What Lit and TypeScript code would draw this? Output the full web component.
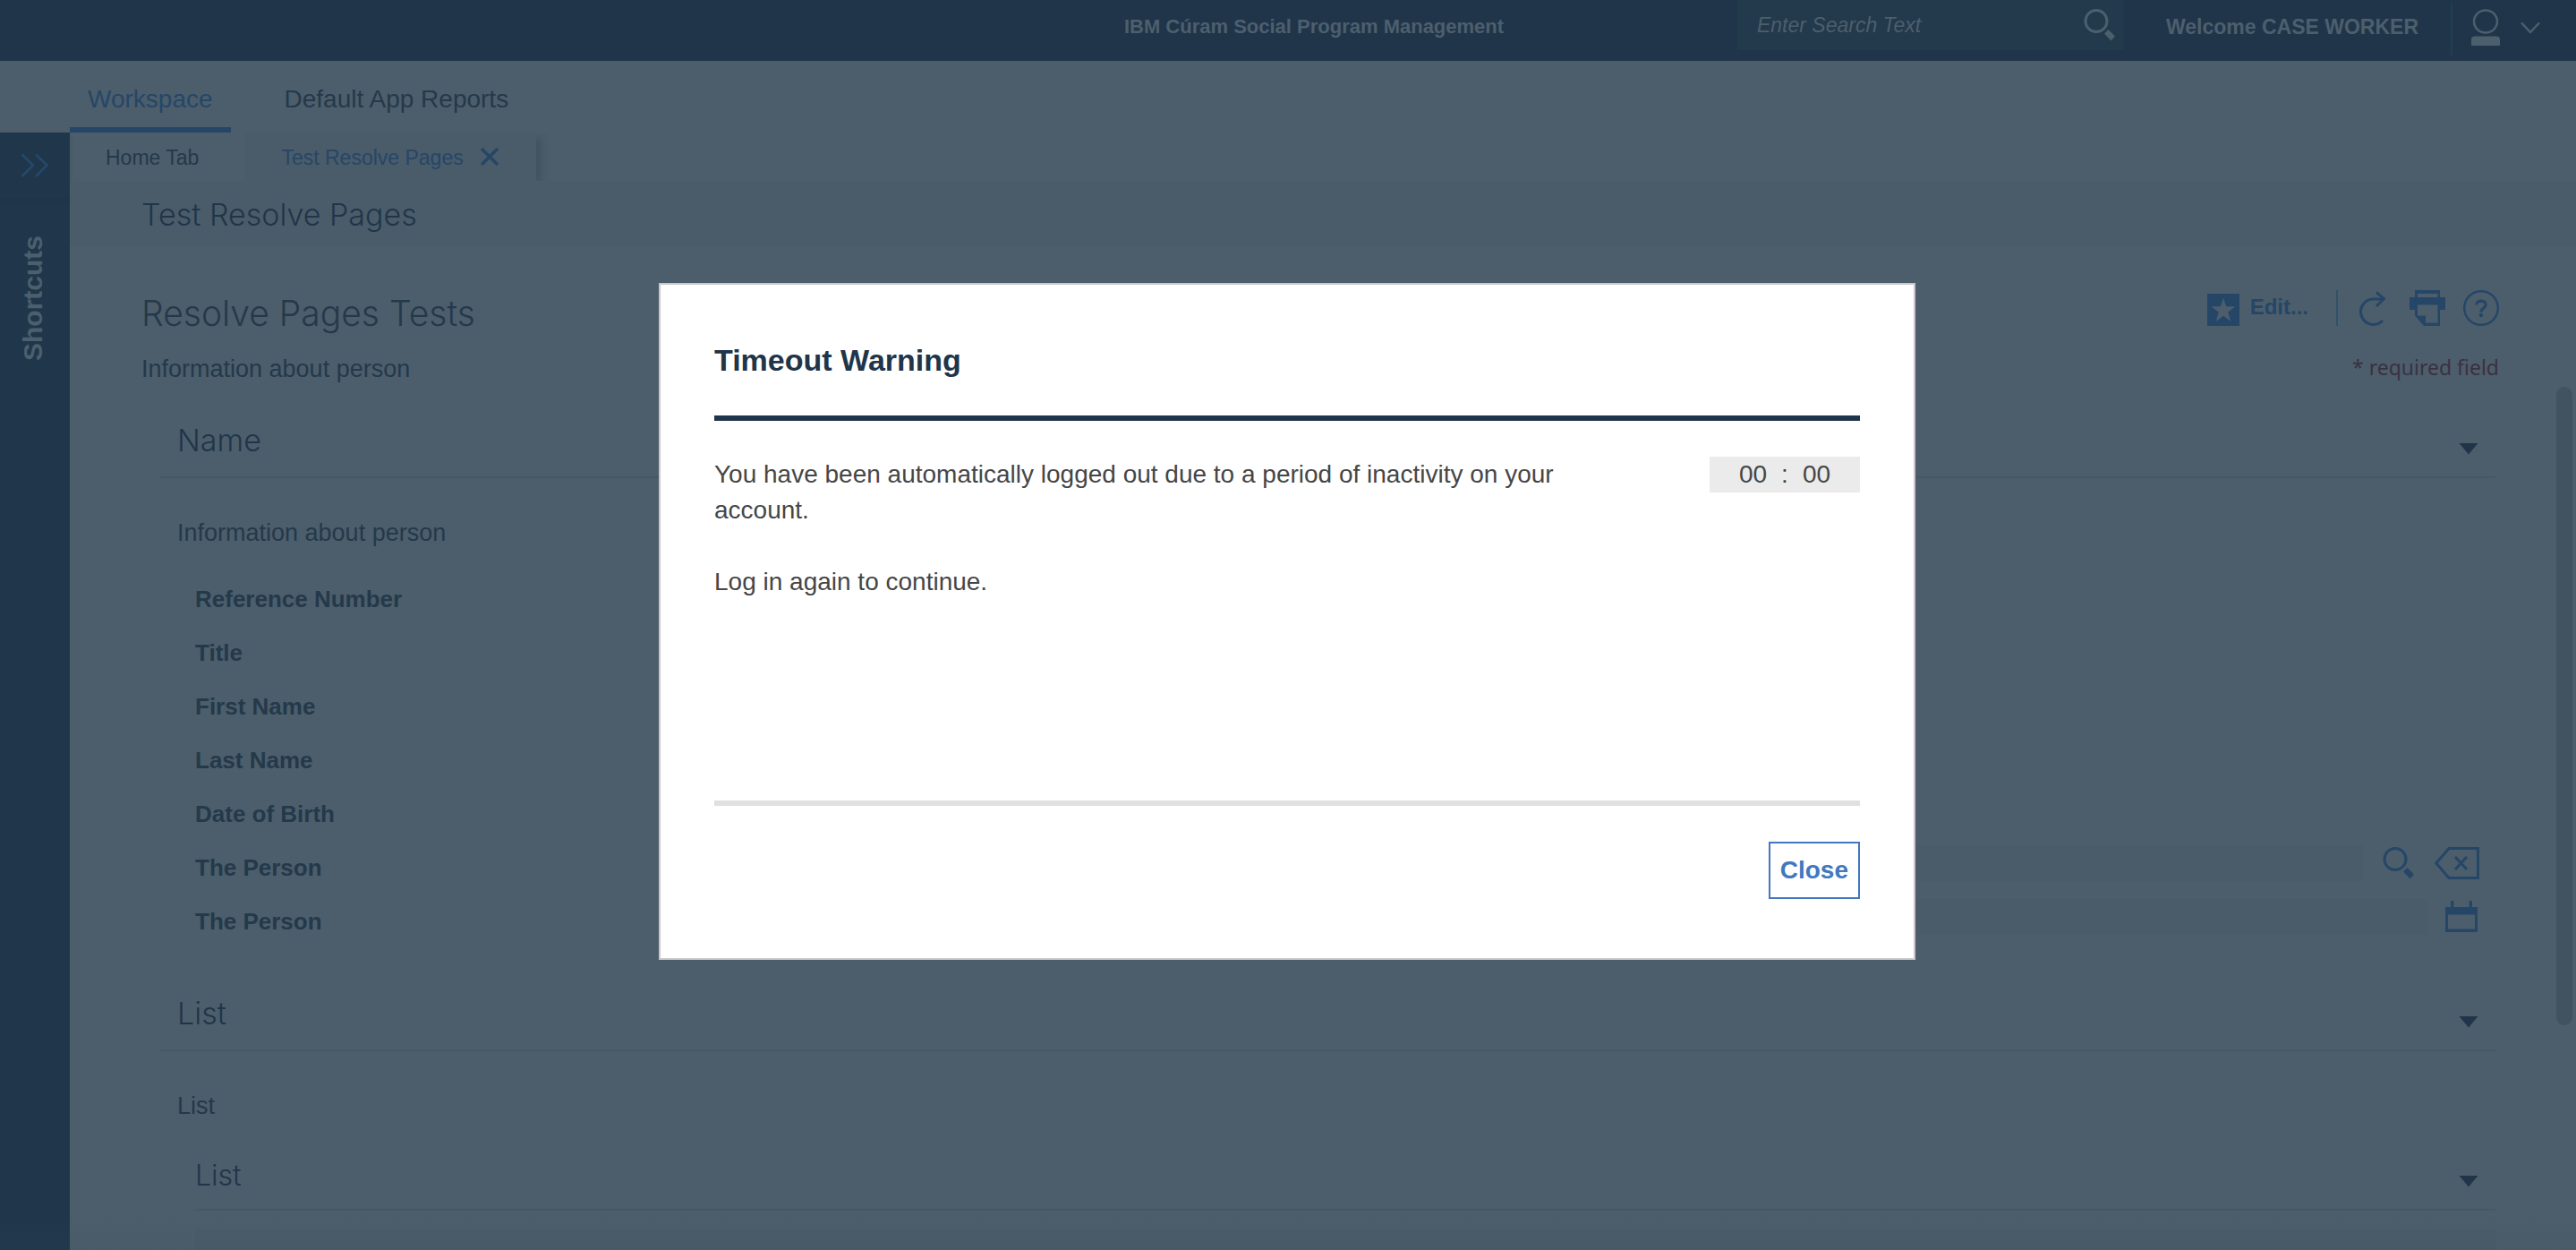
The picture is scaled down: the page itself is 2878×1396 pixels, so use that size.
import { LitElement, html, css } from "lit";
import { customElement } from "lit/decorators.js";

const magnifier = html`<svg class="glyph" width="36" height="36" viewBox="0 0 36 36" aria-hidden="true">
  <circle cx="14" cy="13.500" r="12" fill="none" stroke="currentColor" stroke-width="3" />
  <path d="M27.500 23 L35 30.500 L30.500 35.500 L23 27.500 Z" fill="currentColor" />
</svg>`;

const caret = html`<svg width="22" height="13" viewBox="0 0 22 13" aria-hidden="true">
  <path d="M0.500 0 H21.500 L11 12.500 Z" fill="currentColor" />
</svg>`;

interface Field {
  label: string;
  kind?: "lookup" | "date";
}

const FIELDS: Field[] = [
  { label: "Reference Number" },
  { label: "Title" },
  { label: "First Name" },
  { label: "Last Name" },
  { label: "Date of Birth" },
  { label: "The Person", kind: "lookup" },
  { label: "The Person", kind: "date" },
];

@customElement("timeout-dialog")
export class TimeoutDialog extends LitElement {
  static styles = css`
    :host {
      display: block;
      box-sizing: border-box;
      width: 1404px;
      max-width: 90%;
      background: #ffffff;
      border: 2px solid #c9c8cb;
      padding: 56px 60px 66px;
      color: #464646;
      font-size: 28px;
      line-height: 40px;
    }
    .title {
      margin: 0;
      padding: 8px 0 42px;
      border-bottom: 6px solid #20354a;
      color: #20354a;
      font-size: 34px;
      font-weight: 700;
    }
    .body {
      display: flex;
      justify-content: space-between;
      align-items: flex-start;
      box-sizing: border-box;
      min-height: 430px;
      padding-top: 40px;
      border-bottom: 6px solid #e0e0e0;
    }
    .message {
      max-width: 1000px;
    }
    .message p {
      margin: 0 0 40px;
    }
    .timer {
      display: flex;
      justify-content: center;
      gap: 16px;
      width: 168px;
      background: #ebebeb;
    }
    .actions {
      display: flex;
      justify-content: flex-end;
      padding-top: 40px;
    }
    .close {
      font: inherit;
      font-weight: 700;
      color: #4178be;
      background: #ffffff;
      border: 2px solid #4178be;
      border-radius: 0;
      padding: 10px 11px;
    }
  `;

  render() {
    return html`
      <h2 class="title">Timeout Warning</h2>
      <div class="body">
        <div class="message">
          <p>You have been automatically logged out due to a period of inactivity on your account.</p>
          <p>Log in again to continue.</p>
        </div>
        <div class="timer" role="timer"><span>00</span><span>:</span><span>00</span></div>
      </div>
      <div class="actions"><button class="close" type="button">Close</button></div>
    `;
  }
}

@customElement("app-root")
export class AppRoot extends LitElement {
  static styles = css`
    :host {
      --page: #4c5e6b;
      --panel: #4a5c69;
      --navy: #20354a;
      --ink: #24394a;
      --blue: #264668;
      --pale: #4c5f6d;
      --rule: #465765;
      display: flex;
      flex-direction: column;
      position: relative;
      height: 100vh;
      overflow: hidden;
      background: var(--page);
      color: var(--ink);
      font-family: "Liberation Sans", Arial, sans-serif;
      font-size: 27px;
      line-height: 32px;
    }
    a {
      color: inherit;
      text-decoration: none;
    }
    button {
      display: flex;
      padding: 0;
      border: 0;
      background: none;
      color: inherit;
      font: inherit;
    }
    svg {
      display: block;
      flex: none;
    }
    input {
      border: 0;
      border-radius: 0;
      outline: 0;
      font: inherit;
      color: inherit;
    }
    h1,
    h2,
    h3,
    p {
      margin: 0;
    }

    .header {
      display: grid;
      grid-template-columns: 1fr auto 1fr;
      box-sizing: border-box;
      height: 68px;
      flex: none;
      padding-left: 58px;
      background: var(--navy);
      color: var(--pale);
      font-size: 23px;
      line-height: 28px;
    }
    .brand {
      grid-column: 2;
      padding-top: 16px;
      font-size: 22px;
      font-weight: 700;
    }
    .tools {
      display: flex;
      justify-content: flex-end;
      align-items: flex-start;
    }
    .search {
      display: flex;
      align-items: center;
      box-sizing: border-box;
      width: 431px;
      height: 56px;
      padding: 0 8px 0 22px;
      margin-right: 48px;
      background: #23394c;
    }
    .search input {
      flex: 1;
      min-width: 0;
      padding: 0;
      background: none;
      font-style: italic;
    }
    .search input::placeholder {
      color: var(--pale);
      opacity: 1;
    }
    .welcome {
      padding: 16px 36px 0 0;
      font-weight: 700;
    }
    .user {
      gap: 22px;
      align-items: center;
      height: 58px;
      margin-top: 4px;
      padding: 0 40px 4px 20px;
      border-left: 2px solid #213e57;
    }

    .nav {
      display: flex;
      flex: none;
      gap: 40px;
      padding-left: 78px;
      font-size: 28px;
    }
    .nav a {
      padding: 27px 20px 15px;
      border-bottom: 6px solid transparent;
    }
    .nav a.current {
      color: var(--blue);
      border-color: var(--blue);
    }

    .frame {
      display: flex;
      flex: 1;
      min-height: 0;
    }
    .rail {
      display: flex;
      flex-direction: column;
      align-items: center;
      width: 78px;
      flex: none;
      background: #20374b;
    }
    .expand {
      box-sizing: border-box;
      justify-content: center;
      width: 78px;
      height: 74px;
      padding-top: 23px;
      color: #25496a;
      box-shadow: 0 3px 4px rgba(20, 38, 58, 0.15);
    }
    .shortcuts {
      writing-mode: vertical-rl;
      transform: rotate(180deg);
      margin-right: 4px;
      padding-bottom: 41px;
      color: var(--pale);
      font-size: 30px;
      font-weight: 700;
      line-height: 36px;
    }

    .main {
      display: flex;
      flex-direction: column;
      flex: 1;
      min-width: 0;
    }
    .tabs {
      display: flex;
      gap: 52px;
      padding-left: 40px;
      font-size: 23px;
      line-height: 28px;
    }
    .tab {
      padding: 14px 0 12px;
    }
    .open {
      display: flex;
      align-items: center;
      gap: 19px;
      padding: 0 42px 0 40px;
      background: var(--panel);
      color: var(--blue);
      box-shadow: 8px 4px 8px -2px rgba(40, 56, 68, 0.3);
      clip-path: inset(0 -14px 0 -6px);
    }
    .titlebar {
      padding: 18px 80px 14px;
      background: var(--panel);
      color: var(--navy);
    }
    .light {
      font-family: "Inter", "Liberation Sans", sans-serif;
      font-weight: 300;
      font-size: 34px;
      line-height: 40px;
    }
    .intro {
      padding: 50px 86px 0 80px;
    }
    .row {
      display: flex;
      justify-content: space-between;
    }
    .row h1 {
      padding-top: 2px;
      font-size: 39px;
      line-height: 48px;
    }
    .actions {
      display: flex;
      align-items: center;
      height: 40px;
      gap: 20px;
      color: var(--blue);
    }
    .edit {
      gap: 12px;
      align-items: center;
      padding: 4px 11px 0 0;
      font-size: 24px;
      font-weight: 700;
    }
    .edit span {
      padding-bottom: 6px;
    }
    .reload {
      padding: 0 6px 0 24px;
      border-left: 2px solid #31526a;
    }
    .note {
      height: 28px;
      margin-top: 22px;
    }
    .required {
      color: #3b3142;
      font-family: "Noto Sans", sans-serif;
      font-size: 23px;
      line-height: 28px;
    }

    .viewport {
      display: flex;
      flex: 1;
      min-height: 0;
      overflow: hidden;
    }
    .scroll {
      flex: 1;
      min-width: 0;
      padding: 0 68px 0 100px;
    }
    .track {
      width: 22px;
      padding-top: 8px;
    }
    .thumb {
      width: 18px;
      height: 74%;
      border-radius: 9px;
      background: #415260;
    }
    .head {
      display: flex;
      justify-content: space-between;
      align-items: flex-end;
      padding: 48px 19px 20px 20px;
      border-bottom: 2px solid var(--rule);
      color: var(--navy);
    }
    .head button {
      padding-bottom: 4px;
    }
    .desc {
      padding: 45px 20px 0;
    }
    .fields {
      display: grid;
      padding: 23px 18px 10px 40px;
    }
    .field {
      display: grid;
      grid-template-columns: 32% 1fr;
      align-items: center;
      height: 60px;
    }
    .field label,
    .field .name {
      padding-top: 10px;
      font-size: 26px;
      font-weight: 700;
    }
    .value {
      display: flex;
      align-items: center;
      gap: 22px;
      color: var(--blue);
    }
    .value input {
      flex: 1;
      min-width: 0;
      box-sizing: border-box;
      height: 40px;
      background: var(--panel);
    }
    .date {
      gap: 20px;
      padding-right: 2px;
    }
    .sub {
      margin: 42px 0 21px 40px;
      padding: 0 19px 17px 0;
    }
    .sub .light {
      font-size: 32px;
    }
    .sub button {
      padding-bottom: 7px;
    }
    .grid {
      height: 60px;
      margin-left: 40px;
      background: var(--panel);
    }

    .overlay {
      position: absolute;
      inset: 0;
      display: flex;
      align-items: center;
      justify-content: center;
      padding: 0 2px 8px 0;
      background: linear-gradient(transparent 97%, rgba(50, 60, 85, 0.1));
    }
  `;

  private renderControl(f: Field, id: string) {
    if (f.kind === "lookup") {
      return html`<div class="value">
        <input id=${id} type="text" />
        <button type="button" aria-label="Search">${magnifier}</button>
        <button type="button" aria-label="Clear">
          <svg width="50" height="36" viewBox="0 0 50 36">
            <path d="M16 1.500 H48.500 V34.500 H16 L1.800 18 Z" fill="none" stroke="currentColor" stroke-width="3" />
            <path d="M23 11 L36 25 M36 11 L23 25" stroke="currentColor" stroke-width="3" />
          </svg>
        </button>
      </div>`;
    }
    if (f.kind === "date") {
      return html`<div class="value date">
        <input id=${id} type="text" />
        <button type="button" aria-label="Choose date">
          <svg width="36" height="36" viewBox="0 0 36 36">
            <path d="M6 0 H9.500 V7 H26.500 V0 H30 V7 H36 V35 H0 V7 H6 Z M3 15.500 V31.500 H33 V15.500 Z" fill="currentColor" fill-rule="evenodd" />
          </svg>
        </button>
      </div>`;
    }
    return html`<div class="value"></div>`;
  }

  render() {
    return html`
      <header class="header">
        <div class="brand">IBM Cúram Social Program Management</div>
        <div class="tools">
          <div class="search">
            <input type="text" aria-label="Search" placeholder="Enter Search Text" />
            <button type="button" aria-label="Search">${magnifier}</button>
          </div>
          <div class="welcome">Welcome CASE WORKER</div>
          <button class="user" type="button" aria-label="User menu">
            <svg width="34" height="42" viewBox="0 0 34 42">
              <ellipse cx="17" cy="14" rx="13" ry="12.500" fill="none" stroke="currentColor" stroke-width="2.500" />
              <path d="M1 41 V34 Q1 30.500 5 30.500 H29 Q33 30.500 33 34 V41 Z" fill="currentColor" />
            </svg>
            <svg width="22" height="14" viewBox="0 0 22 14">
              <path d="M1 1.500 L11 12 L21 1.500" fill="none" stroke="currentColor" stroke-width="2.500" />
            </svg>
          </button>
        </div>
      </header>
      <nav class="nav">
        <a class="current" href="#workspace">Workspace</a>
        <a href="#reports">Default App Reports</a>
      </nav>
      <div class="frame">
        <aside class="rail">
          <button class="expand" type="button" aria-label="Expand shortcuts">
            <svg width="32" height="28" viewBox="0 0 32 28">
              <path d="M1.500 1.500 L14 13.500 L1.500 26 M17 1.500 L29.500 13.500 L17 26" fill="none" stroke="currentColor" stroke-width="2.500" />
            </svg>
          </button>
          <div class="shortcuts">Shortcuts</div>
        </aside>
        <main class="main">
          <div class="tabs">
            <a class="tab" href="#home">Home Tab</a>
            <div class="open">
              <a class="tab" href="#resolve">Test Resolve Pages</a>
              <button type="button" aria-label="Close tab">
                <svg width="20" height="20" viewBox="0 0 20 20">
                  <path d="M1 1 L19 19 M19 1 L1 19" stroke="currentColor" stroke-width="3.500" />
                </svg>
              </button>
            </div>
          </div>
          <div class="titlebar"><h2 class="light">Test Resolve Pages</h2></div>
          <div class="intro">
            <div class="row">
              <h1 class="light">Resolve Pages Tests</h1>
              <div class="actions">
                <button class="edit" type="button">
                  <svg width="36" height="36" viewBox="0 0 36 36">
                    <rect width="36" height="36" fill="currentColor" />
                    <path d="M18 5 L21.200 14.300 H31.500 L23.300 20.500 L26.300 31 L18 24.800 L9.700 31 L12.700 20.500 L4.500 14.300 H14.800 Z" fill="#4c5e6b" />
                  </svg>
                  <span>Edit...</span>
                </button>
                <button class="reload" type="button" aria-label="Refresh">
                  <svg width="30" height="40" viewBox="0 0 30 40">
                    <path d="M28 10 H16 A14.200 14.200 0 1 0 26 34" fill="none" stroke="currentColor" stroke-width="3" />
                    <path d="M19 2.500 L27.500 9.500 L19 18" fill="none" stroke="currentColor" stroke-width="3" />
                  </svg>
                </button>
                <button type="button" aria-label="Print">
                  <svg width="40" height="40" viewBox="0 0 40 40">
                    <path d="M6 0 H34 V8 H40 V22 H34 V40 H16 L6 28.500 V22 H0 V8 H6 Z M9 4 V8 H31.500 V4 Z M9 16.500 V28.500 H18 V36.500 H31.500 V16.500 Z" fill="currentColor" fill-rule="evenodd" />
                  </svg>
                </button>
                <button type="button" aria-label="Help">
                  <svg width="40" height="40" viewBox="0 0 40 40">
                    <circle cx="20" cy="20" r="18.800" fill="none" stroke="currentColor" stroke-width="2.400" />
                    <path d="M14.800 16.500 C15 10.500 25.500 10.800 25.200 16.500 C25 20 20 20 20 24.500" fill="none" stroke="currentColor" stroke-width="3.200" />
                    <circle cx="20" cy="28" r="2.200" fill="currentColor" />
                  </svg>
                </button>
              </div>
            </div>
            <div class="row note">
              <p>Information about person</p>
              <p class="required">* required field</p>
            </div>
          </div>
          <div class="viewport">
            <div class="scroll">
              <section>
                <div class="head">
                  <h2 class="light">Name</h2>
                  <button type="button" aria-label="Toggle Name">${caret}</button>
                </div>
                <p class="desc">Information about person</p>
                <div class="fields">
                  ${FIELDS.map(
                    (f, i) => html`<div class="field">
                      ${f.kind
                        ? html`<label for="field-${i}">${f.label}</label>`
                        : html`<span class="name">${f.label}</span>`}
                      ${this.renderControl(f, `field-${i}`)}
                    </div>`
                  )}
                </div>
              </section>
              <section>
                <div class="head">
                  <h2 class="light">List</h2>
                  <button type="button" aria-label="Toggle List">${caret}</button>
                </div>
                <p class="desc">List</p>
                <div class="head sub">
                  <h3 class="light">List</h3>
                  <button type="button" aria-label="Toggle inner List">${caret}</button>
                </div>
                <div class="grid"></div>
              </section>
            </div>
            <div class="track"><div class="thumb"></div></div>
          </div>
        </main>
      </div>
      <div class="overlay">
        <timeout-dialog role="alertdialog" aria-modal="true" aria-label="Timeout Warning"></timeout-dialog>
      </div>
    `;
  }
}
